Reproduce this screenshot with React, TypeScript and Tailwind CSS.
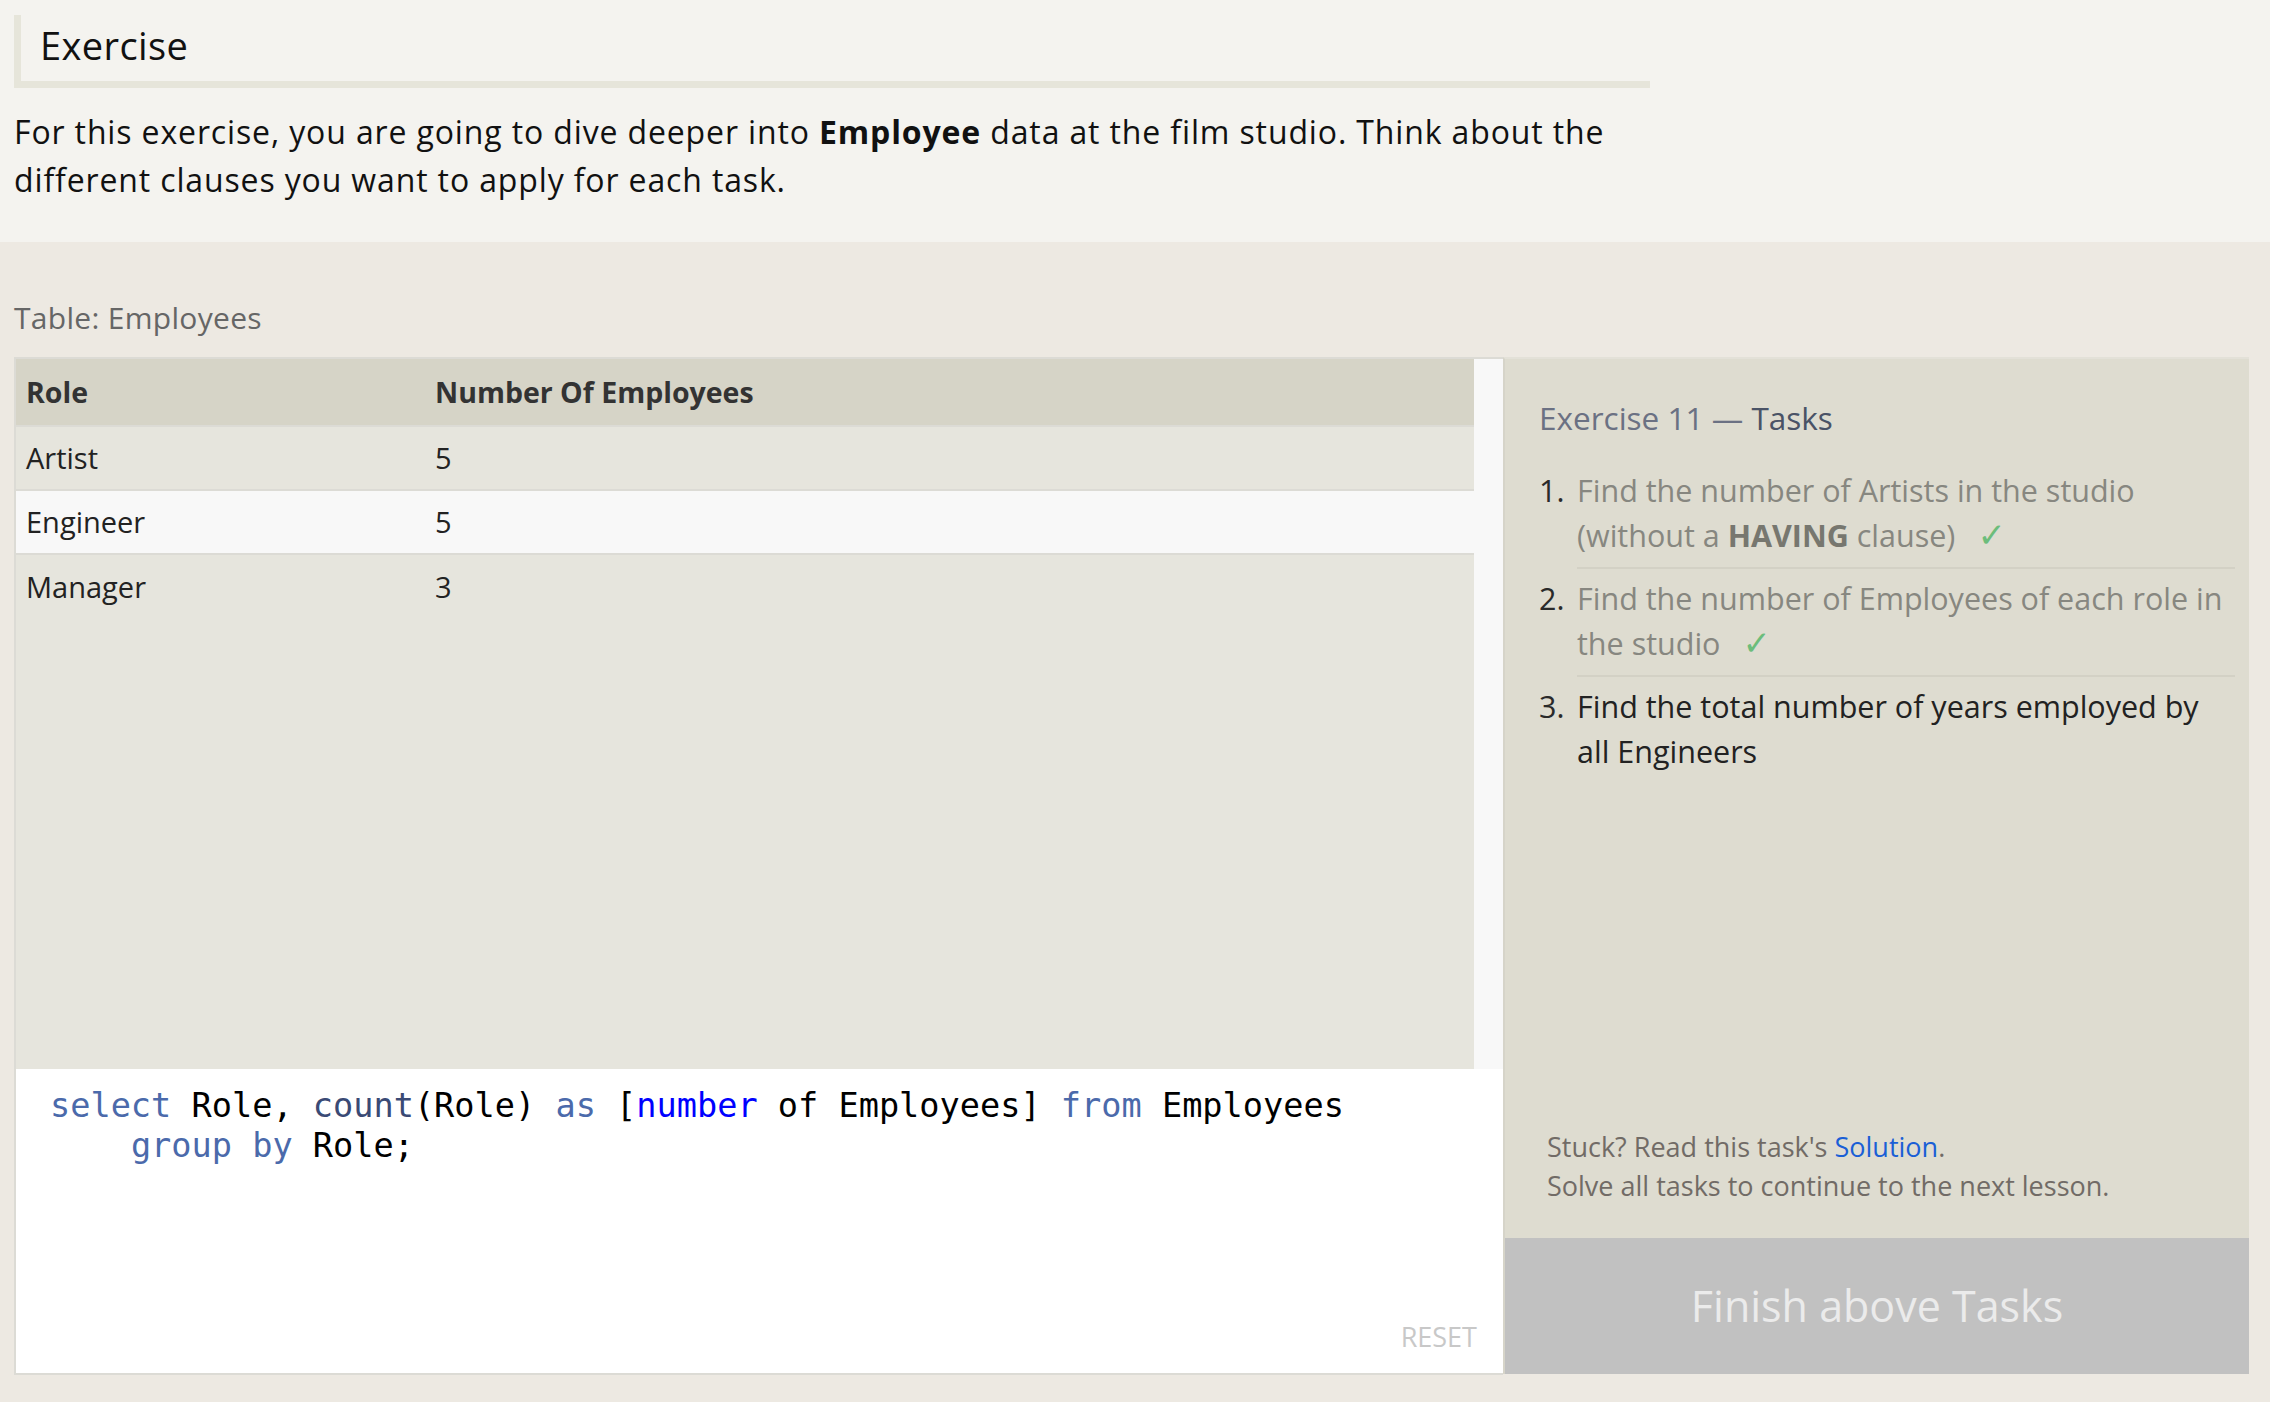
import React from "react";

const rows = [
  { role: "Artist", n: "5", hi: false, last: false },
  { role: "Engineer", n: "5", hi: true, last: false },
  { role: "Manager", n: "3", hi: false, last: true },
];

function Check() {
  return (
    <span className="ml-[22px] text-[#6cbd7b] text-[34px] leading-[30px] font-['DejaVu_Sans',sans-serif]">✓</span>
  );
}

export default function App() {
  return (
    <div className="min-h-[1402px] bg-[#ede9e2] font-['Open_Sans',sans-serif] text-[#111]">
      {/* Top intro */}
      <div className="bg-[#f4f3ef] h-[242px] pl-[14px] pt-[15px]">
        <div className="w-[1636px]">
          <div className="h-[73px] border-l-[7px] border-b-[7px] border-[#e6e5da] pl-[19px] pt-[7px] text-[38px] leading-[46px] tracking-[0.01em] text-[#111]">
            Exercise
          </div>
          <p className="mt-[20px] text-[32px] leading-[48px] tracking-[0.027em] text-[#111]">
            For this exercise, you are going to dive deeper into <b>Employee</b> data at the film
            studio. Think about the different clauses you want to apply for each task.
          </p>
        </div>
      </div>

      {/* Lower section */}
      <div className="pl-[14px] pt-[58px]">
        <div className="text-[30px] leading-[36px] tracking-[0.01em] text-[#666]">Table: Employees</div>
        <div className="mt-[21px] flex items-start">
          {/* Left column: table + editor */}
          <div className="w-[1489px] h-[1018px] border-2 border-r-0 border-[#dcdbd5] flex flex-col">
            <div className="h-[710px] flex">
              <div className="flex-1 bg-[#e6e5dd] text-[29px] text-[#222]">
                <div className="h-[68px] border-b-2 border-[#dcdbd5] bg-[#d6d4c7] grid grid-cols-[409px_1fr] items-center font-bold text-[28.5px] text-[#333]">
                  <div className="pl-[10px]">Role</div>
                  <div className="pl-[10px]">Number Of Employees</div>
                </div>
                {rows.map((r) => (
                  <div
                    key={r.role}
                    className={
                      "h-[64px] grid grid-cols-[409px_1fr] items-center " +
                      (r.last ? "" : "border-b-2 border-[#dcdbd5] ") +
                      (r.hi ? "bg-[#f8f8f8]" : "bg-[#e6e5dd]")
                    }
                  >
                    <div className="pl-[10px]">{r.role}</div>
                    <div className="pl-[10px]">{r.n}</div>
                  </div>
                ))}
              </div>
              <div className="w-[29px] bg-[#f8f8f8]" />
            </div>
            <div className="flex-1 bg-white flex flex-col pl-[34px] pt-[17px] pr-[26px] pb-[22px]">
              <pre className="font-['DejaVu_Sans_Mono',monospace] text-[33.6px] leading-[40px] text-black whitespace-pre">
                <span className="text-[#4b6aab]">select</span> Role, <span className="text-[#3a4a75]">count</span>(Role){" "}
                <span className="text-[#4b6aab]">as</span> [<span className="text-[#0000ff]">number</span> of Employees]{" "}
                <span className="text-[#4b6aab]">from</span> Employees{"\n"}
                {"    "}
                <span className="text-[#4b6aab]">group by</span> Role;
              </pre>
              <div className="mt-auto self-end text-[27px] leading-[28px] text-[#c8c8c8]">RESET</div>
            </div>
          </div>

          {/* Right panel */}
          <div className="w-[746px] h-[1017px] bg-[#dedcd0] border-l-2 border-[#d6d4c9] border-t-2 border-t-[#e3e1d8] flex flex-col">
            <div className="pl-[34px] pt-[39px] text-[31.5px] leading-[40px]">
              <span className="text-[#6b7183]">Exercise 11 — </span>
              <span className="text-[#4a5366]">Tasks</span>
            </div>
            <ol className="mt-[23px] pl-[34px] pr-[14px] text-[30.5px] leading-[45px]">
              <li className="flex pt-[7px]">
                <span className="w-[38px] shrink-0 text-[#2a2a2a]">1.</span>
                <div className="flex-1 pb-[9px] border-b-2 border-[#d3d1c5] text-[#878780]">
                  Find the number of Artists in the studio (without a{" "}
                  <b className="text-[#77776f]">HAVING</b> clause)
                  <Check />
                </div>
              </li>
              <li className="flex pt-[7px]">
                <span className="w-[38px] shrink-0 text-[#2a2a2a]">2.</span>
                <div className="flex-1 pb-[9px] border-b-2 border-[#d3d1c5] text-[#878780]">
                  Find the number of Employees of each role in the studio
                  <Check />
                </div>
              </li>
              <li className="flex pt-[7px]">
                <span className="w-[38px] shrink-0 text-[#2a2a2a]">3.</span>
                <div className="flex-1 pb-[9px] text-[#222]">
                  Find the total number of years employed by all Engineers
                </div>
              </li>
            </ol>
            <div className="flex-1" />
            <div className="pl-[42px] mb-[33px] text-[27px] leading-[39px] text-[#716b66]">
              <div>
                Stuck? Read this task's <span className="text-[#1a5fd6]">Solution</span>.
              </div>
              <div>Solve all tasks to continue to the next lesson.</div>
            </div>
            <div className="h-[136px] bg-[#c1c1c1] flex items-center justify-center text-[43px] text-[#ebebeb]">
              Finish above Tasks
            </div>
          </div>
        </div>
      </div>
    </div>
  );
}
